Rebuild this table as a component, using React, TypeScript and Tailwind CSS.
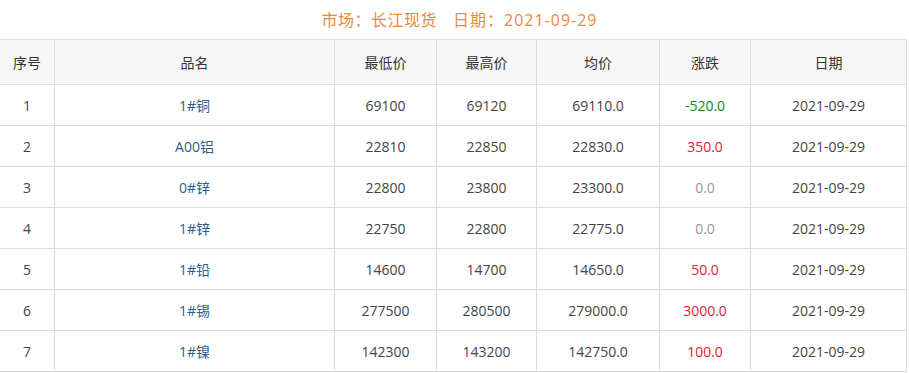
const rows = [
  { no: 1, name: '1#铜', low: '69100', high: '69120', avg: '69110.0', change: '-520.0', date: '2021-09-29' },
  { no: 2, name: 'A00铝', low: '22810', high: '22850', avg: '22830.0', change: '350.0', date: '2021-09-29' },
  { no: 3, name: '0#锌', low: '22800', high: '23800', avg: '23300.0', change: '0.0', date: '2021-09-29' },
  { no: 4, name: '1#锌', low: '22750', high: '22800', avg: '22775.0', change: '0.0', date: '2021-09-29' },
  { no: 5, name: '1#铅', low: '14600', high: '14700', avg: '14650.0', change: '50.0', date: '2021-09-29' },
  { no: 6, name: '1#锡', low: '277500', high: '280500', avg: '279000.0', change: '3000.0', date: '2021-09-29' },
  { no: 7, name: '1#镍', low: '142300', high: '143200', avg: '142750.0', change: '100.0', date: '2021-09-29' },
];

function changeColor(v: string) {
  if (v.startsWith('-')) return 'text-[#118a11]';
  if (Number(v) === 0) return 'text-[#999999]';
  return 'text-[#e5202e]';
}

export default function App() {
  return (
    <div
      className="w-[909px] h-[373px] overflow-hidden bg-white text-[14px] text-[#444444]"
      style={{ fontFamily: '"Open Sans", "Noto Sans CJK SC", sans-serif' }}
    >
      {/* 标题 */}
      <div className="flex h-[39px] items-center justify-center pl-[10px] text-[16px] text-[#f0883a]">
        <span className="tracking-[0.5px]">市场：长江现货</span>
        <span className="ml-[16px] tracking-[1px]">日期：2021-09-29</span>
      </div>
      <table className="w-[907px] -ml-px table-fixed border-collapse">
        <colgroup>
          <col className="w-[55px]" />
          <col className="w-[280px]" />
          <col className="w-[102px]" />
          <col className="w-[100px]" />
          <col className="w-[123px]" />
          <col className="w-[91px]" />
          <col className="w-[156px]" />
        </colgroup>
        <thead>
          <tr className="h-[45px] bg-[#f7f7f7] text-[#333333]">
            {['序号', '品名', '最低价', '最高价', '均价', '涨跌', '日期'].map((h) => (
              <th key={h} className="border border-[#dddddd] text-center font-normal">
                {h}
              </th>
            ))}
          </tr>
        </thead>
        <tbody>
          {rows.map((r) => (
            <tr key={r.no} className="h-[41px]">
              <td className="border border-[#dddddd] text-center">{r.no}</td>
              <td className="border border-[#dddddd] text-center text-[#2b5d8c]">{r.name}</td>
              <td className="border border-[#dddddd] text-center">{r.low}</td>
              <td className="border border-[#dddddd] text-center">{r.high}</td>
              <td className="border border-[#dddddd] text-center">{r.avg}</td>
              <td className={`border border-[#dddddd] text-center ${changeColor(r.change)}`}>{r.change}</td>
              <td className="border border-[#dddddd] text-center">{r.date}</td>
            </tr>
          ))}
        </tbody>
      </table>
    </div>
  );
}
